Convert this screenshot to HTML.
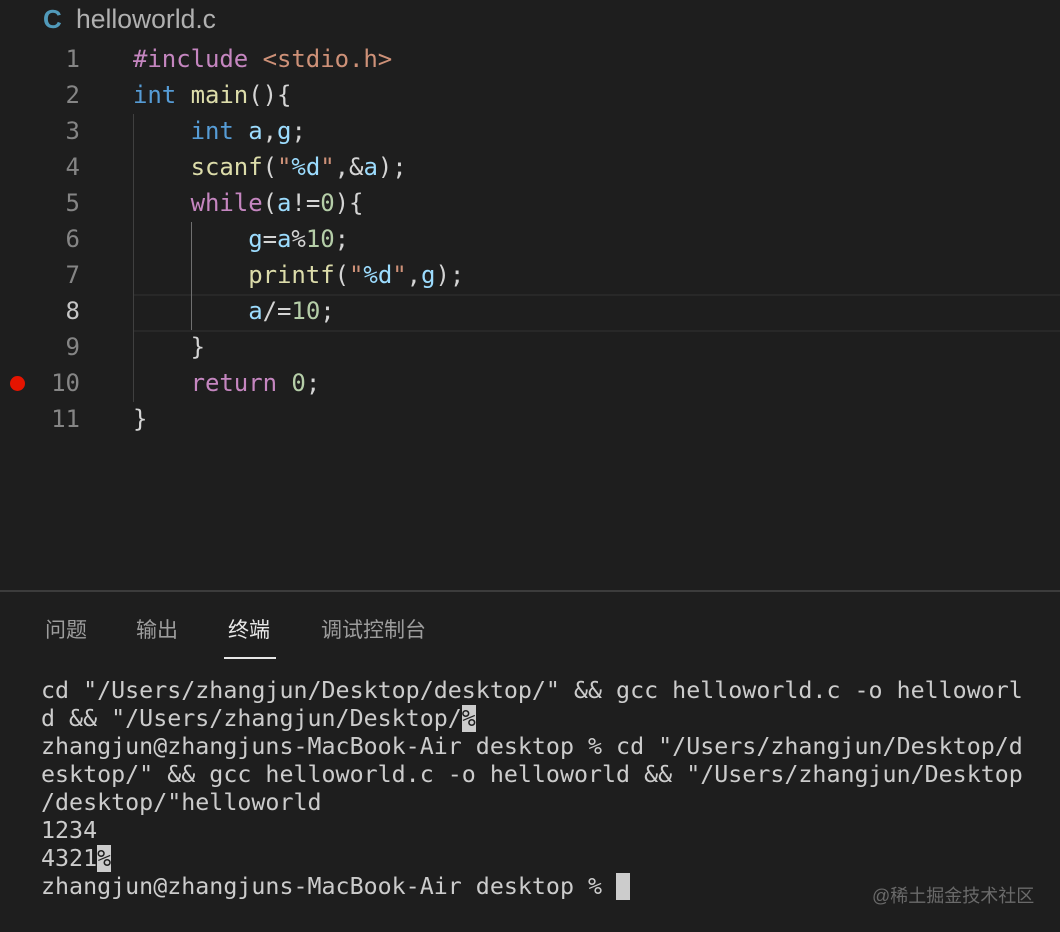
<!DOCTYPE html>
<html><head><meta charset="utf-8"><style>
body{margin:0;width:1060px;height:932px;background:#1e1e1e;overflow:hidden;position:relative;font-family:"DejaVu Sans Mono","Liberation Mono",monospace;}
.abs{position:absolute;white-space:pre;}
.ln{position:absolute;width:80px;text-align:right;left:0;font-size:24px;color:#858585;line-height:36px;}
.code{position:absolute;left:133px;font-size:24px;line-height:36px;color:#d4d4d4;letter-spacing:-0.05px;}
.k{color:#569cd6}.p{color:#c586c0}.s{color:#ce9178}.f{color:#dcdcaa}.v{color:#9cdcfe}.n{color:#b5cea8}
.term{position:absolute;left:41px;top:677px;font-size:23.3px;line-height:28px;color:#cccccc;}
.hl{background:#cccccc;color:#1e1e1e}
.tab{position:absolute;top:614px;font-family:"Noto Sans CJK SC",sans-serif;font-size:21px;color:#9d9d9d;}
</style></head><body>
<div class="abs" style="left:43px;top:4px;font-family:'Liberation Sans',sans-serif;font-size:26px;font-weight:bold;color:#519aba;">C</div>
<div class="abs" style="left:76px;top:4px;font-family:'Liberation Sans',sans-serif;font-size:26.5px;color:#b0b0b0;">helloworld.c</div>

<div style="position:absolute;left:133px;right:0;top:294px;height:34px;border-top:2px solid #282828;border-bottom:2px solid #282828;"></div>
<div style="position:absolute;left:133px;top:114px;width:1px;height:288px;background:#404040"></div>
<div style="position:absolute;left:191px;top:222px;width:1px;height:108px;background:#707070"></div>
<div style="position:absolute;left:10px;top:376px;width:15px;height:15px;border-radius:50%;background:#e51400"></div>

<div class="ln" style="top:41px">1<br>2<br>3<br>4<br>5<br>6<br>7<br><span style="color:#c6c6c6">8</span><br>9<br>10<br>11</div>
<div class="code" style="top:41px;white-space:pre"><span class="p">#include</span> <span class="s">&lt;stdio.h&gt;</span>
<span class="k">int</span> <span class="f">main</span>(){
    <span class="k">int</span> <span class="v">a</span>,<span class="v">g</span>;
    <span class="f">scanf</span>(<span class="s">"</span><span class="v">%d</span><span class="s">"</span>,&amp;<span class="v">a</span>);
    <span class="p">while</span>(<span class="v">a</span>!=<span class="n">0</span>){
        <span class="v">g</span>=<span class="v">a</span>%<span class="n">10</span>;
        <span class="f">printf</span>(<span class="s">"</span><span class="v">%d</span><span class="s">"</span>,<span class="v">g</span>);
        <span class="v">a</span>/=<span class="n">10</span>;
    }
    <span class="p">return</span> <span class="n">0</span>;
}</div>

<div style="position:absolute;left:0;right:0;top:590px;height:2px;background:#3c3c3c"></div>
<div class="tab" style="left:45px">问题</div>
<div class="tab" style="left:136px">输出</div>
<div class="tab" style="left:228px;color:#e7e7e7">终端</div>
<div class="tab" style="left:321px">调试控制台</div>
<div style="position:absolute;left:224px;top:657px;width:52px;height:2px;background:#e7e7e7"></div>

<div class="term" style="white-space:pre">cd "/Users/zhangjun/Desktop/desktop/" &amp;&amp; gcc helloworld.c -o helloworl
d &amp;&amp; "/Users/zhangjun/Desktop/<span class="hl">%</span>
zhangjun@zhangjuns-MacBook-Air desktop % cd "/Users/zhangjun/Desktop/d
esktop/" &amp;&amp; gcc helloworld.c -o helloworld &amp;&amp; "/Users/zhangjun/Desktop
/desktop/"helloworld
1234
4321<span class="hl">%</span>
zhangjun@zhangjuns-MacBook-Air desktop % <span class="hl"> </span></div>

<div class="abs" style="left:872px;top:882px;font-family:'Liberation Sans','Noto Sans CJK SC',sans-serif;font-size:18px;color:#6a6a6a;">@稀土掘金技术社区</div>
</body></html>
